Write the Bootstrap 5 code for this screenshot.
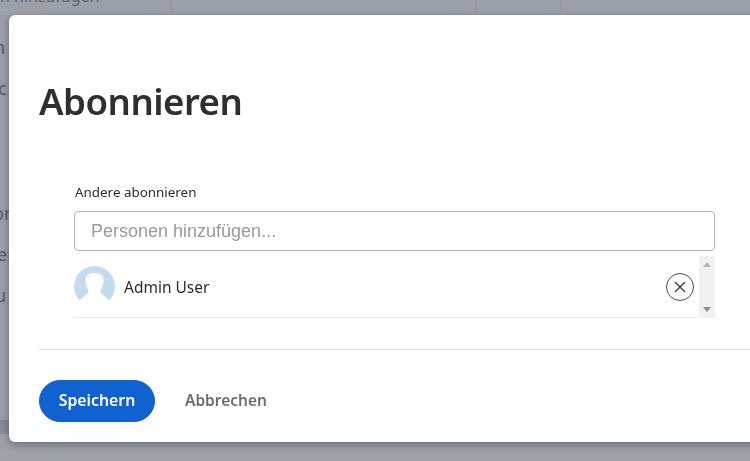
<!DOCTYPE html>
<html lang="de">
<head>
<meta charset="utf-8">
<title>Abonnieren</title>
<link href="https://cdn.jsdelivr.net/npm/bootstrap@5.3.0/dist/css/bootstrap.min.css" rel="stylesheet">
<style>
html,body{height:100%;overflow:hidden}
body{background:#9c9fa7;font-family:"Noto Sans",sans-serif;color:#2c2c2c}
.bg-page{height:461px;overflow:hidden;color:#565a62;font-size:18px}
.bg-top{height:15px;flex:none;overflow:hidden;background:#9ca0a8;border-bottom:5px solid #a0a3ab}
.bg-topline{display:block;width:110px;font-size:16px;line-height:16px;margin-top:-12px;white-space:nowrap;color:#5f636b}
.bg-cell{flex:none;height:10px;border-right:2px solid #979aa3}
.bg-side{width:9px;flex:none;padding-top:12px;height:405px;overflow:hidden}
.bg-letter{display:block;height:41px;line-height:41px;white-space:nowrap}
.bg-gap{margin-top:84px}
.bg-foot{height:41px;flex:none;background:linear-gradient(#828891 0,#8a8e97 14px,#9ea1a8 14px);display:flex}
.bg-foot i{flex:none;height:19px;margin-top:0;border-right:2px solid #979aa2}
.sub-dialog{position:fixed;left:9px;top:15px;width:760px;height:427px;background:#fff;border-radius:6px;box-shadow:0 2px 8px rgba(60,66,75,.6);padding:0 0 0 30px}
.dlg-title{font-size:36.6px;font-weight:600;line-height:52px;margin:60px 0 0;letter-spacing:-.5px;color:#2f2f2f}
.dlg-body{margin:55px 0 0 35px;width:641px}
.dlg-label{font-size:13.4px;line-height:20px;margin:0 0 9px 1px;color:#2c2c2c}
.dlg-input{height:40px;border:1px solid #b3b3b3;border-radius:4px;font-family:"Liberation Sans",sans-serif;font-size:18px;padding:0 16px;color:#333;box-shadow:none}
.dlg-input::placeholder{color:#9a9a9a;opacity:1}
.sub-row{height:62px;margin-top:5px;border-bottom:1px solid #ebebeb}
.avatar-pic{width:41px;height:42px;margin-right:9px;flex:none}
.sub-name{font-size:15.5px;line-height:22px}
.rm-btn{width:28px;height:28px;border:1px solid #4b4b4b;border-radius:50%;background:#fff;padding:0;margin-right:5px;margin-top:1px;line-height:0}
.fake-scroll{width:16px;height:62px;background:#f1f1f1;flex:none;padding:6px 0}
.arrow-up{width:0;height:0;border-left:4.5px solid transparent;border-right:4.5px solid transparent;border-bottom:5px solid #b5b5b5}
.arrow-down{width:0;height:0;border-left:4.5px solid transparent;border-right:4.5px solid transparent;border-top:5px solid #8f8f8f}
.dlg-rule{margin:31px 0 0;border-top:1px solid #e1e1e1;opacity:1}
.dlg-foot{margin-top:30px;gap:29px}
.btn-save{--bs-btn-bg:#0f62cf;--bs-btn-border-color:#0f62cf;--bs-btn-color:#fff;--bs-btn-hover-bg:#0f62cf;--bs-btn-hover-color:#fff;height:42px;width:116px;border-radius:21px;font-size:15.8px;font-weight:600;padding:0}
.btn-cancel{--bs-btn-color:#6e6e6e;--bs-btn-border-color:transparent;font-size:15.5px;font-weight:600;padding:0}
</style>
</head>
<body>
<div class="bg-page d-flex flex-column">
  <div class="bg-top d-flex">
    <span class="bg-topline">n hinzufügen</span>
    <div class="bg-cell" style="width:62px"></div>
    <div class="bg-cell" style="width:305px"></div>
    <div class="bg-cell" style="width:85px"></div>
  </div>
  <div class="bg-side">
    <span class="bg-letter" style="margin-left:-6px">n</span>
    <span class="bg-letter" style="margin-left:-2px">c</span>
    <span class="bg-letter bg-gap" style="margin-left:-7px">or</span>
    <span class="bg-letter" style="margin-left:-3px">er</span>
    <span class="bg-letter" style="margin-left:-5px">u</span>
  </div>
  <div class="bg-foot">
    <i style="width:478px"></i><i style="width:85px"></i><i style="width:87px"></i><i style="width:75px"></i>
  </div>
</div>
<div class="sub-dialog" role="dialog">
  <h1 class="dlg-title">Abonnieren</h1>
  <div class="dlg-body">
    <p class="dlg-label">Andere abonnieren</p>
    <input class="form-control dlg-input" type="text" placeholder="Personen hinzufügen...">
    <div class="sub-row d-flex align-items-center">
      <svg class="avatar-pic" viewBox="0 0 41 42" aria-hidden="true">
        <path d="M5.500 34.500A20.500 20.500 0 1 1 35.500 34.500L28 28C26.500 27 26.500 25 27 23C29 20 29.500 17 29.500 14C29.500 9 26 7 20.500 7S11.500 9 11.500 14C11.500 17 12 20 14 23C14.500 25 14.500 27 13 28Z" fill="#c5dcee"/>
      </svg>
      <span class="sub-name flex-grow-1">Admin User</span>
      <button class="rm-btn" type="button" aria-label="Entfernen">
        <svg width="26" height="26" viewBox="0 0 26 26" aria-hidden="true"><path d="M8 8l10 10M18 8L8 18" stroke="#3a3a3a" stroke-width="1.400" fill="none"/></svg>
      </button>
      <div class="fake-scroll d-flex flex-column justify-content-between align-items-center">
        <div class="arrow-up"></div>
        <div class="arrow-down"></div>
      </div>
    </div>
  </div>
  <hr class="dlg-rule">
  <div class="dlg-foot d-flex align-items-center">
    <button class="btn btn-save" type="button">Speichern</button>
    <button class="btn btn-cancel" type="button">Abbrechen</button>
  </div>
</div>
<script src="https://cdn.jsdelivr.net/npm/bootstrap@5.3.0/dist/js/bootstrap.bundle.min.js"></script>
</body>
</html>
